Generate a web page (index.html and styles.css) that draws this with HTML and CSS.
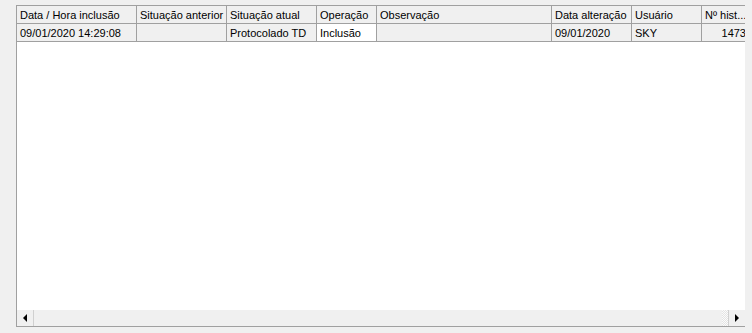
FILE: index.html
```html
<!DOCTYPE html>
<html>
<head>
<meta charset="utf-8">
<link rel="stylesheet" href="styles.css">
</head>
<body>
<div class="grid">
  <div class="viewport">
    <table class="table">
      <colgroup>
        <col class="c1"><col class="c2"><col class="c3"><col class="c4"><col class="c5"><col class="c6"><col class="c7"><col class="c8">
      </colgroup>
      <thead>
        <tr>
          <th>Data / Hora inclusão</th>
          <th>Situação anterior</th>
          <th>Situação atual</th>
          <th>Operação</th>
          <th>Observação</th>
          <th>Data alteração</th>
          <th>Usuário</th>
          <th>Nº hist...</th>
        </tr>
      </thead>
      <tbody>
        <tr>
          <td>09/01/2020 14:29:08</td>
          <td></td>
          <td>Protocolado TD</td>
          <td class="focus">Inclusão</td>
          <td></td>
          <td>09/01/2020</td>
          <td>SKY</td>
          <td class="num">1473</td>
        </tr>
      </tbody>
    </table>
  </div>
  <div class="hscroll">
    <div class="btn left"><span class="tri-left"></span></div>
    <div class="track"></div>
    <div class="grip"></div>
    <div class="btn right"><span class="tri-right"></span></div>
  </div>
</div>
</body>
</html>
```
FILE: styles.css
```css
html, body {
  margin: 0;
  padding: 0;
  background: #f0f0f0;
  width: 752px;
  height: 333px;
  overflow: hidden;
}
body {
  padding: 5px 0 0 16px;
  box-sizing: border-box;
  font-family: "Liberation Sans", Arial, sans-serif;
  font-size: 11px;
  color: #000;
}
.grid {
  width: 729px;
  height: 322px;
  border-left: 1px solid #a0a0a0;
  border-top: 1px solid #a0a0a0;
  border-bottom: 1px solid #a0a0a0;
  box-sizing: border-box;
  display: flex;
  flex-direction: column;
  background: #fff;
}
.viewport {
  flex: 1;
  overflow: hidden;
  background: #fff;
}
.table {
  border-collapse: separate;
  border-spacing: 0;
  table-layout: fixed;
  width: 734px;
}
.c1 { width: 120px; }
.c2 { width: 90px; }
.c3 { width: 90px; }
.c4 { width: 60px; }
.c5 { width: 175px; }
.c6 { width: 80px; }
.c7 { width: 70px; }
.c8 { width: 49px; }
th, td {
  height: 18px;
  padding: 1px 0 0 3px;
  box-sizing: border-box;
  border-right: 1px solid #a0a0a0;
  border-bottom: 1px solid #a0a0a0;
  background: #f0f0f0;
  font-weight: normal;
  text-align: left;
  white-space: nowrap;
  overflow: hidden;
  line-height: 16px;
  vertical-align: middle;
}
th:last-child, td:last-child { border-right: 0; }
td.focus { background: #fff; }
td.num { text-align: right; padding-right: 5px; }
.hscroll {
  height: 16px;
  display: flex;
  background: #f0f0f0;
}
.btn {
  width: 16px;
  height: 16px;
  display: flex;
  align-items: center;
  justify-content: center;
  background: #f0f0f0;
}
.btn.left { border-right: 1px solid #d0d0d0; }
.btn.right { border-left: 1px solid #d0d0d0; }
.track {
  flex: 1;
  background: #f0f0f0;
}
.grip {
  width: 6px;
  background-color: #f4f4f4;
  background-image: repeating-conic-gradient(#e4e4e4 0 25%, #fbfbfb 0 50%);
  background-size: 2px 2px;
}
.tri-left {
  width: 0; height: 0;
  border-top: 4px solid transparent;
  border-bottom: 4px solid transparent;
  border-right: 4px solid #000;
}
.tri-right {
  width: 0; height: 0;
  border-top: 4px solid transparent;
  border-bottom: 4px solid transparent;
  border-left: 4px solid #000;
}
```
